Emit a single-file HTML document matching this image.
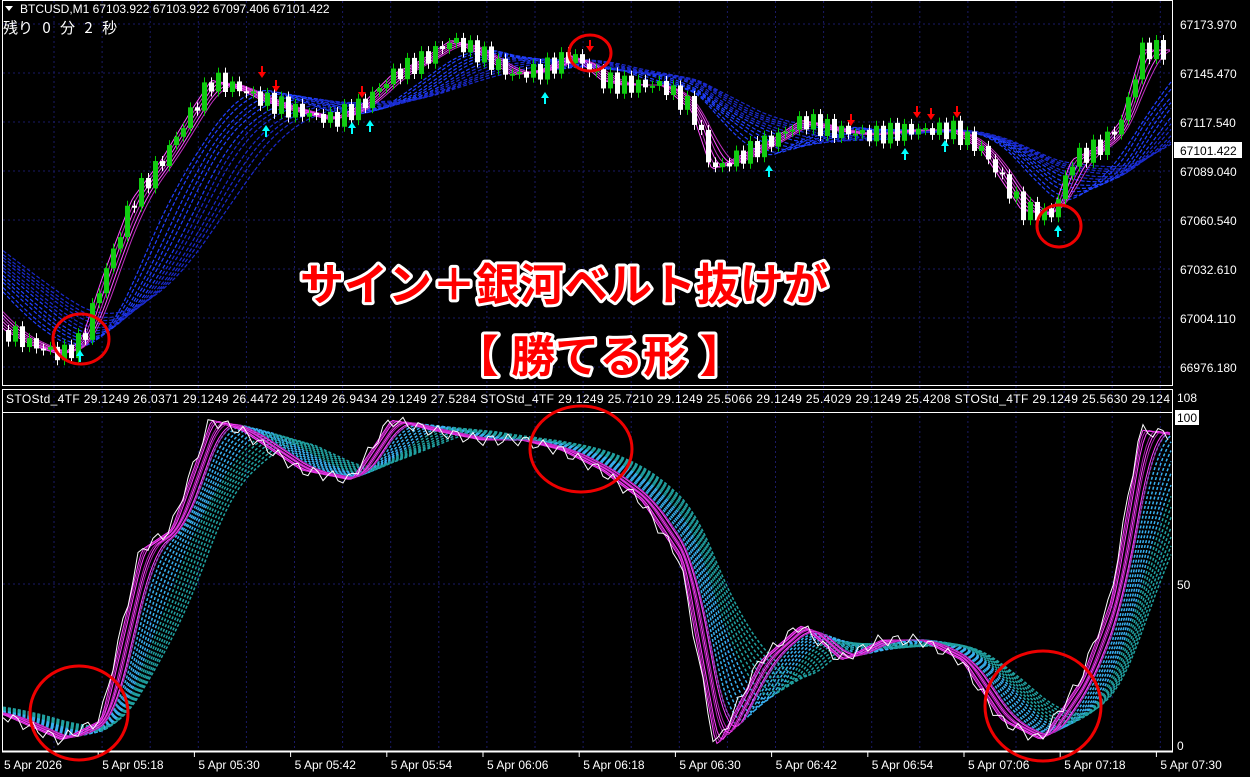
<!DOCTYPE html>
<html><head><meta charset="utf-8"><style>
html,body{margin:0;padding:0;background:#000;width:1250px;height:777px;overflow:hidden}
svg{display:block}
.ax{font:12px "Liberation Sans",sans-serif;fill:#fff}
.hd{font:12px "Liberation Sans",sans-serif;fill:#fff}
.big{font:bold 44px "Liberation Sans","Noto Sans CJK JP",sans-serif;fill:#f00;stroke:#fff;stroke-width:6px;paint-order:stroke;stroke-linejoin:round}
</style></head><body>
<svg id="s" width="1250" height="777" xmlns="http://www.w3.org/2000/svg">
<rect width="1250" height="777" fill="#000"/>
<g id="grid" stroke="#1a1a66" stroke-dasharray="2,3" stroke-width="1"></g>
<g id="bands"></g>
<g id="candles"></g>
<g id="ind"></g>
<rect x="2.5" y="0.5" width="1170" height="385" fill="none" stroke="#fff"/>
<rect x="2.5" y="389.5" width="1170" height="362" fill="none" stroke="#fff"/>
<line x1="2" y1="412.5" x2="1173" y2="412.5" stroke="#fff"/>
<line x1="2" y1="751.5" x2="1173" y2="751.5" stroke="#fff" stroke-width="2"/>
<path d="M5,6 L13,6 L9,11 Z" fill="#fff"/>
<text class="hd" x="20" y="13">BTCUSD,M1  67103.922 67103.922 67097.406 67101.422</text>
<text x="3" y="33" style="font:15px 'Noto Sans CJK JP',sans-serif;fill:#fff;word-spacing:6px">残り 0 分 2 秒</text>
<text class="hd" x="6" y="403" textLength="1164">STOStd_4TF 29.1249 26.0371 29.1249 26.4472 29.1249 26.9434 29.1249 27.5284  STOStd_4TF 29.1249 25.7210 29.1249 25.5066 29.1249 25.4029 29.1249 25.4208  STOStd_4TF 29.1249 25.5630 29.124</text>
<rect x="1173" y="390" width="77" height="20" fill="#000"/>
<g class="ax">
<text x="1180" y="29">67173.970</text>
<text x="1180" y="78">67145.470</text>
<text x="1180" y="127">67117.540</text>
<text x="1180" y="176">67089.040</text>
<text x="1180" y="225">67060.540</text>
<text x="1180" y="274">67032.610</text>
<text x="1180" y="323">67004.110</text>
<text x="1180" y="372">66976.180</text>
<text x="1177" y="402">108</text>
<text x="1177" y="589">50</text>
<text x="1177" y="750">0</text>
</g>
<rect x="1174" y="142" width="68" height="16" fill="#fff"/>
<text x="1180" y="155" style="font:12px 'Liberation Sans',sans-serif;fill:#000">67101.422</text>
<rect x="1175" y="410" width="24" height="15" fill="#fff"/>
<text x="1177" y="422" style="font:12px 'Liberation Sans',sans-serif;fill:#000">100</text>
<g id="time" class="ax"></g>
<text class="big" x="300" y="300">サイン＋銀河ベルト抜けが</text>
<text class="big" x="455" y="372">【 勝てる形 】</text>
<g fill="none" stroke="#e00" stroke-width="3">
<ellipse cx="81" cy="339" rx="28" ry="25"/>
<ellipse cx="590" cy="53" rx="21" ry="18"/>
<ellipse cx="1059" cy="226" rx="22" ry="21"/>
<ellipse cx="79" cy="713" rx="49" ry="47"/>
<ellipse cx="581" cy="449" rx="51" ry="43"/>
<ellipse cx="1043" cy="706" rx="58" ry="55"/>
</g>
</svg>
<script>
var NS="http://www.w3.org/2000/svg";
function el(p,t,a){var e=document.createElementNS(NS,t);for(var k in a)e.setAttribute(k,a[k]);document.getElementById(p).appendChild(e);return e;}
for(var x=54;x<1170;x+=48.1)el("grid","line",{x1:x,y1:1,x2:x,y2:750});
[24,73,122,171,220,269,318,367,584].forEach(function(y){el("grid","line",{x1:3,y1:y,x2:1172,y2:y});});
var tl=["5 Apr 2026","5 Apr 05:18","5 Apr 05:30","5 Apr 05:42","5 Apr 05:54","5 Apr 06:06","5 Apr 06:18","5 Apr 06:30","5 Apr 06:42","5 Apr 06:54","5 Apr 07:06","5 Apr 07:18","5 Apr 07:30"];
tl.forEach(function(t,i){var x=2+i*96.2;el("time","line",{x1:x+96.2,y1:752,x2:x+96.2,y2:757,stroke:"#fff"});var e=el("time","text",{x:i==0?4:x+4,y:769});e.textContent=t;});
function interp(pts,x){if(x<=pts[0][0])return pts[0][1];for(var i=1;i<pts.length;i++){if(x<=pts[i][0]){var a=pts[i-1],b=pts[i];return a[1]+(b[1]-a[1])*(x-a[0])/(b[0]-a[0]);}}return pts[pts.length-1][1];}
var price=[[-400,120],[-200,180],[-60,260],[3,330],[30,345],[60,355],[80,340],[100,280],[130,200],[160,160],[190,110],[210,80],[240,90],[260,100],[290,110],[330,120],[360,105],[390,75],[420,60],[450,40],[480,55],[510,75],[540,70],[570,55],[600,80],[620,85],[660,85],[690,110],[710,170],[740,155],[770,140],[800,120],[830,130],[870,135],[910,130],[950,130],[980,150],[1000,180],[1020,210],[1050,215],[1070,160],[1100,145],[1120,120],[1140,50],[1172,50]];
function lagged(pts,lag,x0,x1,step){var out=[];for(var x=x0;x<=x1;x+=step){var s=0,n=0;for(var k=0;k<=lag;k+=3){s+=interp(pts,x-k);n++;}out.push([x,s/n]);}return out;}
function pl(g,arr,attrs){attrs.points=arr.map(function(p){return p[0].toFixed(1)+","+p[1].toFixed(1)}).join(" ");attrs.fill="none";return el(g,"polyline",attrs);}
for(var k=0;k<12;k++){pl("bands",lagged(price,70+k*10,3,1172,4),{stroke:k<6?"#2040ff":"#1a2acc","stroke-width":1.2,"stroke-dasharray":"4,2"});}
for(var k=0;k<6;k++){pl("bands",lagged(price,3+k*6,3,1172,3),{stroke:k%2?"#c030c0":"#ff50ff","stroke-width":1});}
var prev=interp(price,3);
for(var x=6;x<1168;x+=7){var c=interp(price,x)+(Math.sin(x*1.3)*10);var o=prev;prev=c;var ty=Math.min(o,c),h=Math.max(2,Math.abs(o-c));var up=c<o;
el("candles","line",{x1:x+2.5,y1:ty-5,x2:x+2.5,y2:ty+h+5,stroke:up?"#0c0":"#fff"});
el("candles","rect",{x:x,y:ty,width:5,height:h,fill:up?"#1c1":"#fff"});}
[[262,78],[276,92],[362,98],[590,52],[851,126],[917,118],[931,120],[957,118]].forEach(function(a){el("candles","path",{d:"M"+(a[0]-4)+","+(a[1]-6)+" h8 l-4,6z M"+(a[0]-1)+","+(a[1]-12)+" h2 v6 h-2z",fill:"#f00"});});
[[80,350],[266,125],[352,122],[370,120],[545,92],[769,165],[905,148],[945,140],[1058,225]].forEach(function(a){el("candles","path",{d:"M"+(a[0]-4)+","+(a[1]+6)+" l4,-6 l4,6z M"+(a[0]-1)+","+(a[1]+6)+" h2 v6 h-2z",fill:"#0ff"});});
var sto=[[-100,700],[3,715],[60,740],[100,720],[140,550],[170,530],[210,420],[240,430],[300,470],[350,480],[390,420],[430,430],[480,440],[520,440],[560,450],[600,470],[640,500],[680,560],[715,748],[760,660],[800,625],[840,660],[880,640],[920,640],[960,660],[1000,720],[1040,740],[1080,680],[1110,600],[1140,430],[1172,435]];
for(var k=0;k<14;k++){pl("ind",lagged(sto,30+k*6,3,1172,4),{stroke:k<7?"#38b0f0":"#20a0a0","stroke-width":1.5,"stroke-dasharray":"3,2"});}
for(var k=0;k<8;k++){pl("ind",lagged(sto,3+k*4,3,1172,3),{stroke:k%2?"#b020b0":"#ff40ff","stroke-width":1});}
var stoN=[];for(var x=3;x<=1172;x+=5){stoN.push([x,Math.min(748,interp(sto,x)+Math.sin(x*0.9)*6)]);}
pl("ind",stoN,{stroke:"#fff","stroke-width":1});
</script>
</body></html>
